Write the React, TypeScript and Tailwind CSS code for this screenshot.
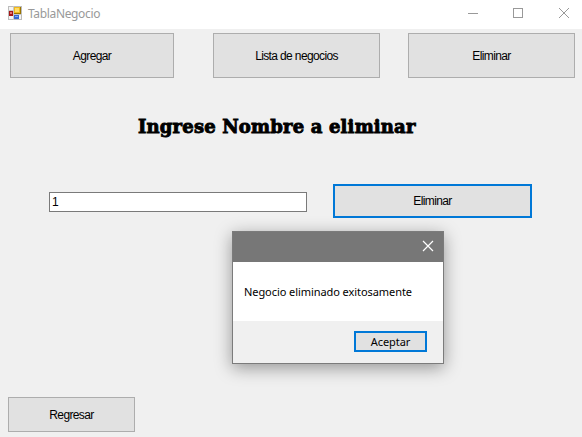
import type { ReactNode } from "react";

function FormButton({ className, children }: { className: string; children: ReactNode }) {
  return (
    <button
      className={`flex shrink-0 items-center justify-center whitespace-nowrap bg-[#e1e1e1] font-['Liberation_Sans',Arial,sans-serif] text-[12px] leading-4 tracking-[-0.63px] text-black ${className}`}
    >
      {children}
    </button>
  );
}

function AppIcon() {
  return (
    <svg width="14" height="14" viewBox="0 0 14 14" shapeRendering="crispEdges">
      <path d="M.5.5h13v13H.5z" fill="#f4f4f4" stroke="#bcbcbc" />
      <path d="M5.5 0v14M0 4.500h5M5 8.5h9" stroke="#c8c8c8" />
      <rect x="6" y="1" width="7" height="7" fill="#9a7400" />
      <rect x="6" y="1" width="6" height="6" fill="#f0b91c" />
      <rect x="7" y="2" width="4" height="4" fill="#ffdc67" />
      <rect x="1" y="5" width="4" height="5" fill="#a51616" />
      <rect x="2" y="6" width="2" height="2" fill="#e67272" />
      <rect x="6" y="9" width="5" height="4" fill="#3569d2" />
      <rect x="7" y="10" width="3" height="1" fill="#7fa9f4" />
    </svg>
  );
}

function TitleBar() {
  return (
    <header className="flex h-[29px] items-start bg-white pl-2 text-[#999999]">
      <div className="pt-[6px]">
        <AppIcon />
      </div>
      <span className="ml-[6px] pt-[6px] font-['Noto_Sans',sans-serif] text-[12px] leading-4 tracking-[-0.35px]">
        TablaNegocio
      </span>
      <svg className="ml-auto mr-[4px] mt-[7px]" width="110" height="12" fill="none" stroke="#999999">
        <path d="M0 6.5h10" shapeRendering="crispEdges" />
        <path d="M45.500 1.500h9v9h-9z" shapeRendering="crispEdges" />
        <path d="M91 1l10 10M101 1L91 11" />
      </svg>
    </header>
  );
}

function MessageDialog() {
  return (
    <section className="absolute left-[232px] top-[231px] flex h-[133px] w-[212px] flex-col border border-[#7b7b7b] bg-white shadow-[0_4px_16px_rgba(0,0,0,0.38)]">
      <div className="flex h-[30px] shrink-0 justify-end bg-[#777777] pr-[9px] pt-[8px]">
        <svg width="12" height="12" fill="none" stroke="#ffffff" strokeWidth="1.2">
          <path d="M1 1l10 10M11 1L1 11" />
        </svg>
      </div>
      <p className="h-[59px] shrink-0 whitespace-nowrap pl-[11px] pt-[22px] font-['Noto_Sans',sans-serif] text-[11px] leading-4 tracking-[-0.07px] text-black">
        Negocio eliminado exitosamente
      </p>
      <div className="flex flex-1 items-start justify-end bg-[#f0f0f0] pr-4 pt-[10px]">
        <button className="flex h-[21px] w-[73px] items-center justify-center border-2 border-[#0078d7] bg-[#e1e1e1] font-['Noto_Sans',sans-serif] text-[11px] leading-4 tracking-[-0.07px] text-black">
          Aceptar
        </button>
      </div>
    </section>
  );
}

export default function App() {
  return (
    <div className="relative flex h-[437px] w-[582px] flex-col overflow-hidden bg-[#f0f0f0]">
      <TitleBar />
      <nav className="flex pl-[10px] pt-1">
        <FormButton className="h-[45px] w-[164px] border border-[#adadad]">Agregar</FormButton>
        <FormButton className="ml-[39px] h-[45px] w-[167px] border border-[#adadad]">Lista de negocios</FormButton>
        <FormButton className="ml-7 h-[45px] w-[167px] border border-[#adadad]">Eliminar</FormButton>
      </nav>
      <h1 className="mt-[37px] h-6 whitespace-nowrap pl-[138px] font-['DejaVu_Serif',serif] text-[18px] font-bold leading-6 tracking-[0.17px] text-black [-webkit-text-stroke:0.9px_black]">
        Ingrese Nombre a eliminar
      </h1>
      <main className="mt-[45px] flex pl-[49px]">
        <input
          className="mt-2 h-5 w-[258px] border border-[#7a7a7a] bg-white px-[2px] font-['Liberation_Sans',Arial,sans-serif] text-[12px] leading-4 text-black outline-none"
          defaultValue="1"
        />
        <FormButton className="ml-[26px] h-[34px] w-[199px] border-2 border-[#0078d7]">Eliminar</FormButton>
      </main>
      <footer className="mb-[5px] mt-auto pl-2">
        <FormButton className="h-[35px] w-[127px] border border-[#adadad]">Regresar</FormButton>
      </footer>
      <MessageDialog />
    </div>
  );
}
